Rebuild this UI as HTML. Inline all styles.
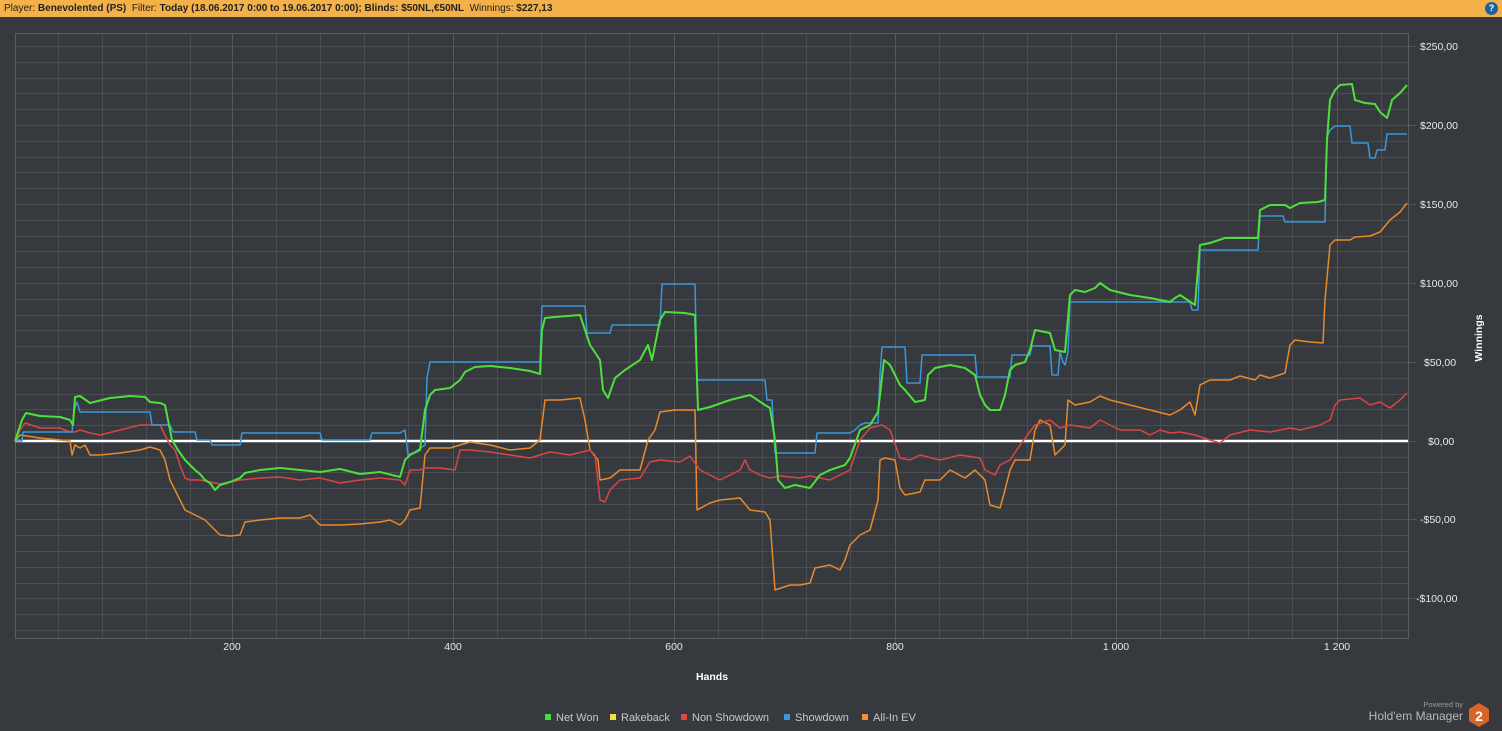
<!DOCTYPE html>
<html><head><meta charset="utf-8"><style>
html,body{margin:0;padding:0;width:1502px;height:731px;overflow:hidden;background:#363a3e;font-family:"Liberation Sans","DejaVu Sans",sans-serif;}
.bar{position:absolute;left:0;top:0;width:1502px;height:17px;background:#f4b049;font-size:10px;line-height:17px;color:#222;}
.bar span{padding-left:4px;}
.help{position:absolute;right:4px;top:2px;width:13px;height:13px;border-radius:50%;background:#1f5f9e;color:#fff;font-size:9px;font-weight:bold;text-align:center;line-height:13px;}
svg{position:absolute;left:0;top:0;}
</style></head><body>
<div class="bar"><span>Player: <b>Benevolented (PS)</b> &nbsp;Filter: <b>Today (18.06.2017 0:00 to 19.06.2017 0:00); Blinds: $50NL,€50NL</b> &nbsp;Winnings: <b>$227,13</b></span></div>
<div class="help">?</div>
<svg width="1502" height="731" style="top:0">
<path fill="none" stroke="#4a4e53" stroke-width="1" d="M15 46.5H1408M15 62.5H1408M15 78.5H1408M15 93.5H1408M15 109.5H1408M15 125.5H1408M15 141.5H1408M15 157.5H1408M15 172.5H1408M15 188.5H1408M15 204.5H1408M15 220.5H1408M15 236.5H1408M15 251.5H1408M15 267.5H1408M15 283.5H1408M15 299.5H1408M15 315.5H1408M15 330.5H1408M15 346.5H1408M15 362.5H1408M15 378.5H1408M15 394.5H1408M15 409.5H1408M15 425.5H1408M15 457.5H1408M15 472.5H1408M15 488.5H1408M15 504.5H1408M15 519.5H1408M15 535.5H1408M15 551.5H1408M15 567.5H1408M15 583.5H1408M15 598.5H1408M15 614.5H1408M15 630.5H1408
M58.5 33V638M102.5 33V638M146.5 33V638M190.5 33V638M276.5 33V638M320.5 33V638M364.5 33V638M408.5 33V638M497.5 33V638M541.5 33V638M585.5 33V638M629.5 33V638M718.5 33V638M762.5 33V638M806.5 33V638M850.5 33V638M939.5 33V638M983.5 33V638M1027.5 33V638M1071.5 33V638M1160.5 33V638M1204.5 33V638M1248.5 33V638M1292.5 33V638M1381.5 33V638"/>
<path fill="none" stroke="#55595e" stroke-width="1" d="M232.5 33V646M453.5 33V646M674.5 33V646M895.5 33V646M1116.5 33V646M1337.5 33V646M1408 46.5H1416M1408 125.5H1416M1408 204.5H1416M1408 283.5H1416M1408 362.5H1416M1408 441.5H1416M1408 519.5H1416M1408 598.5H1416"/>
<rect x="15.5" y="33.5" width="1393" height="605" fill="none" stroke="#5a5e63"/>
<line x1="15" x2="1408" y1="441" y2="441" stroke="#fff" stroke-width="2.5"/>
<g fill="none" stroke-width="1.5" stroke-linejoin="round">
<polyline stroke="#e98a2a" points="15,441 20,435 40,438 60,440 70,441 72,455 75,445 80,448 85,445 90,455 100,455 120,453 140,450 150,447 160,450 165,460 170,480 175,490 180,500 185,510 195,515 205,520 215,530 220,535 230,536 240,535 245,522 260,520 280,518 300,518 310,515 320,525 340,525 360,524 380,522 390,520 400,525 405,520 410,510 420,508 425,455 430,448 450,448 460,445 470,442 490,445 510,450 530,448 540,440 545,400 560,400 580,398 585,420 590,450 598,460 600,480 610,478 620,470 640,470 648,440 655,430 660,412 675,410 695,410 697,510 710,503 720,500 740,498 750,510 765,512 770,520 775,590 790,585 800,585 810,583 815,568 830,565 840,570 845,560 850,545 860,535 870,530 878,500 880,460 885,458 895,460 900,488 905,495 920,492 925,480 940,480 950,470 965,478 975,470 985,480 990,505 1000,508 1005,490 1010,470 1015,460 1030,460 1035,430 1040,420 1050,425 1055,455 1065,445 1068,400 1075,405 1090,402 1100,396 1110,400 1130,405 1150,410 1170,415 1180,410 1190,402 1195,415 1200,385 1210,380 1230,380 1240,376 1255,380 1260,375 1270,378 1285,373 1290,345 1295,340 1310,342 1323,343 1325,300 1330,245 1335,240 1350,240 1355,237 1370,236 1380,232 1390,220 1400,212 1407,203"/>
<polyline stroke="#d94545" points="15,441 20,430 25,423 40,428 60,428 70,432 75,432 80,430 90,433 100,435 120,430 140,425 160,425 165,435 170,445 175,450 180,465 185,478 190,480 200,480 210,482 220,484 240,480 260,478 280,477 300,480 320,478 340,483 360,480 380,478 400,480 405,485 410,470 420,470 425,468 440,468 455,470 460,450 470,450 490,452 510,455 530,458 550,452 570,455 590,450 595,455 600,500 605,502 610,490 620,480 640,478 650,462 660,460 680,462 690,456 700,470 720,480 740,470 745,460 750,470 760,475 770,478 780,476 800,478 810,476 820,478 830,480 840,475 850,470 860,440 870,428 882,425 890,430 900,458 910,460 920,455 940,460 960,455 980,458 985,470 995,475 1000,465 1010,460 1020,445 1035,425 1050,420 1060,428 1070,425 1090,428 1100,420 1110,425 1120,430 1140,430 1150,435 1160,430 1170,433 1180,432 1195,435 1210,440 1220,443 1230,435 1250,430 1270,432 1290,428 1300,430 1320,425 1330,420 1335,405 1340,400 1360,398 1370,405 1380,402 1390,408 1400,400 1407,393"/>
<polyline stroke="#3a97d8" points="15,441 22,441 23,432 72,432 74,410 77,402 80,412 150,412 152,425 170,425 173,432 195,432 197,440 210,440 212,445 240,445 242,433 320,433 322,440 370,440 372,433 400,433 405,430 408,455 415,452 425,445 427,378 430,362 540,362 542,306 585,306 587,333 610,333 612,325 660,325 662,284 695,284 697,380 765,380 767,400 772,400 775,453 815,453 817,433 850,433 855,430 860,425 865,423 878,423 880,375 882,347 905,347 907,383 920,383 922,355 975,355 977,377 1010,377 1012,355 1030,355 1032,346 1050,346 1052,375 1058,375 1060,352 1063,362 1065,365 1068,352 1070,302 1190,302 1192,310 1198,310 1200,250 1258,250 1260,216 1283,216 1285,222 1325,222 1327,137 1330,130 1335,126 1350,126 1352,143 1368,143 1370,158 1375,158 1377,150 1385,150 1387,134 1407,134"/>
<polyline stroke="#4ee03a" stroke-width="2" points="15,441 22,420 26,413 40,416 60,417 70,420 73,425 75,397 80,396 90,403 110,398 130,396 145,397 150,402 160,403 165,405 168,420 172,440 178,450 185,460 190,465 195,470 200,474 205,480 210,483 215,490 220,485 230,482 240,478 245,473 260,470 280,468 300,470 320,472 340,469 360,474 380,472 400,477 405,460 410,455 420,450 425,410 430,395 435,390 450,388 460,380 465,372 475,367 490,366 510,368 530,371 540,374 542,330 545,318 555,317 580,315 585,330 590,345 600,360 603,390 608,398 615,378 625,370 640,360 648,345 652,360 660,320 665,312 685,313 695,315 698,410 710,407 730,400 750,395 765,405 770,408 775,440 778,480 785,488 795,485 810,488 820,475 830,470 845,465 850,458 860,430 870,425 878,412 880,395 884,360 890,365 895,375 900,385 905,390 915,402 925,400 928,375 935,368 950,365 965,368 975,375 980,395 985,405 990,410 1000,410 1005,395 1010,370 1015,365 1025,362 1030,350 1035,330 1050,333 1055,350 1065,352 1070,295 1075,290 1085,292 1095,288 1100,283 1110,290 1130,295 1150,298 1170,302 1175,298 1180,295 1195,305 1200,245 1210,243 1225,238 1245,238 1258,238 1260,210 1270,205 1285,205 1290,208 1300,203 1318,202 1325,200 1327,140 1330,100 1335,90 1340,85 1352,84 1355,100 1365,103 1375,104 1380,112 1387,118 1390,108 1392,100 1400,93 1407,85"/>
</g>
<g fill="#e8e8e8" font-size="10.5" font-family="Liberation Sans, sans-serif">
<text x="1420" y="50">$250,00</text><text x="1420" y="129">$200,00</text><text x="1420" y="208">$150,00</text><text x="1420" y="287">$100,00</text><text x="1424" y="366">$50,00</text><text x="1428" y="445">$0,00</text><text x="1420" y="523">-$50,00</text><text x="1416" y="602">-$100,00</text>
<text x="232" y="650" text-anchor="middle">200</text><text x="453" y="650" text-anchor="middle">400</text><text x="674" y="650" text-anchor="middle">600</text><text x="895" y="650" text-anchor="middle">800</text><text x="1116" y="650" text-anchor="middle">1 000</text><text x="1337" y="650" text-anchor="middle">1 200</text>
<text x="712" y="680" text-anchor="middle" font-weight="bold" fill="#fff">Hands</text>
<text transform="translate(1482,338) rotate(-90)" text-anchor="middle" font-weight="bold" fill="#fff">Winnings</text>
</g>
<g font-size="11" fill="#c8c8c8" font-family="Liberation Sans, sans-serif">
<rect x="545" y="714" width="6" height="6" fill="#3ee03a"/><text x="556" y="721">Net Won</text>
<rect x="610" y="714" width="6" height="6" fill="#f0e040"/><text x="621" y="721">Rakeback</text>
<rect x="681" y="714" width="6" height="6" fill="#e04848"/><text x="692" y="721">Non Showdown</text>
<rect x="784" y="714" width="6" height="6" fill="#3a97d8"/><text x="795" y="721">Showdown</text>
<rect x="862" y="714" width="6" height="6" fill="#f0923a"/><text x="873" y="721">All-In EV</text>
</g>
<text x="1463" y="707" font-size="7.5" fill="#9a9a9a" text-anchor="end" font-family="Liberation Sans, sans-serif">Powered by</text>
<text x="1463" y="720" font-size="12" fill="#b8b8b8" text-anchor="end" font-family="Liberation Sans, sans-serif">Hold'em Manager</text>
<polygon points="1479,703 1489,709 1489,721 1479,727 1469,721 1469,709" fill="#d9642a"/>
<text x="1479" y="721" font-size="14" font-weight="bold" fill="#fff" text-anchor="middle" font-family="Liberation Sans, sans-serif">2</text>
</svg>
</body></html>
